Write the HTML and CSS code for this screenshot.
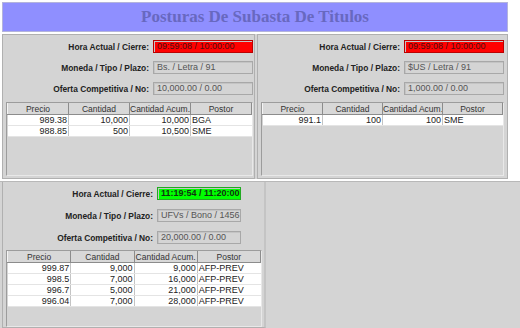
FILE: index.html
```html
<!DOCTYPE html>
<html lang="es">
<head>
<meta charset="UTF-8">
<title>Posturas De Subasta De Titulos</title>
<link rel="stylesheet" href="styles.css">
</head>
<body>
<div class="screen">
    <div class="header"><h1>Posturas De Subasta De Titulos</h1></div>

    <div class="top">
        <!-- Bs. / Letra -->
        <div class="panel">
            <div class="row"><span class="lbl">Hora Actual / Cierre:</span><span class="fld red">09:59:08 / 10:00:00</span></div>
            <div class="row"><span class="lbl">Moneda / Tipo / Plazo:</span><span class="fld">Bs. / Letra / 91</span></div>
            <div class="row"><span class="lbl">Oferta Competitiva / No:</span><span class="fld">10,000.00 / 0.00</span></div>
            <div class="grid">
                <table>
                    <tr><th>Precio</th><th>Cantidad</th><th>Cantidad Acum.</th><th>Postor</th></tr>
                    <tr><td>989.38</td><td>10,000</td><td>10,000</td><td class="name">BGA</td></tr>
                    <tr><td>988.85</td><td>500</td><td>10,500</td><td class="name">SME</td></tr>
                </table>
            </div>
        </div>

        <!-- $US / Letra -->
        <div class="panel right">
            <div class="row"><span class="lbl">Hora Actual / Cierre:</span><span class="fld red">09:59:08 / 10:00:00</span></div>
            <div class="row"><span class="lbl">Moneda / Tipo / Plazo:</span><span class="fld">$US / Letra / 91</span></div>
            <div class="row"><span class="lbl">Oferta Competitiva / No:</span><span class="fld">1,000.00 / 0.00</span></div>
            <div class="grid">
                <table>
                    <tr><th>Precio</th><th>Cantidad</th><th>Cantidad Acum.</th><th>Postor</th></tr>
                    <tr><td>991.1</td><td>100</td><td>100</td><td class="name">SME</td></tr>
                </table>
            </div>
        </div>
    </div>

    <div class="lower">
        <!-- UFVs / Bono -->
        <div class="panel wide">
            <div class="row"><span class="lbl">Hora Actual / Cierre:</span><span class="fld green">11:19:54 / 11:20:00</span></div>
            <div class="row"><span class="lbl">Moneda / Tipo / Plazo:</span><span class="fld">UFVs / Bono / 1456</span></div>
            <div class="row"><span class="lbl">Oferta Competitiva / No:</span><span class="fld">20,000.00 / 0.00</span></div>
            <div class="grid">
                <table>
                    <tr><th>Precio</th><th>Cantidad</th><th>Cantidad Acum.</th><th>Postor</th></tr>
                    <tr><td>999.87</td><td>9,000</td><td>9,000</td><td class="name">AFP-PREV</td></tr>
                    <tr><td>998.5</td><td>7,000</td><td>16,000</td><td class="name">AFP-PREV</td></tr>
                    <tr><td>996.7</td><td>5,000</td><td>21,000</td><td class="name">AFP-PREV</td></tr>
                    <tr><td>996.04</td><td>7,000</td><td>28,000</td><td class="name">AFP-PREV</td></tr>
                </table>
            </div>
        </div>
    </div>
</div>
</body>
</html>
```

FILE: styles.css
```css
body {margin:0;padding:0;background:#fff;font-family:"Liberation Sans",Arial,sans-serif;color:#333;}
.screen {width:520px;height:328px;overflow:hidden;display:flex;flex-direction:column;}
.header {margin:2px 12px 0 2px;height:31px;background:#8f8fff;border:1px solid #b4b4dc;display:flex;align-items:center;justify-content:center;}
.header h1 {margin:0;font-family:"Liberation Serif","Times New Roman",serif;font-size:17px;font-weight:bold;color:#6868c0;}
.top {display:flex;gap:2px;margin:2px 12px 0 2px;background:#d4d4d4;}
.panel {background:#d4d4d4;border:1px solid #b0b0b0;box-sizing:border-box;width:253px;height:145px;padding:5px 1px 0 1px;display:flex;flex-direction:column;}
.panel.right {width:251px;padding-right:3px;}
.lower {flex:1;margin-top:2px;background:#d4d4d4;border-top:1px solid #b8b8b8;}
.panel.wide {width:264px;height:auto;min-height:146px;margin-left:2px;border-top:none;padding:5px 1px 0 1px;border-right:2px solid #c4c4c4;}
.row {display:flex;justify-content:flex-end;align-items:center;gap:4px;margin-bottom:8px;height:13px;}
.wide .row {margin-bottom:9px;padding-right:22px;}
.wide .row:nth-child(3) {margin-bottom:8px;}
.lbl {font-size:8.4px;font-weight:bold;color:#222;white-space:nowrap;}
.fld {box-sizing:border-box;width:100px;height:13px;border:1px solid #a8a8a8;box-shadow:inset 1px 1px 0 #c4c4c4;font-size:9px;color:#555;padding:0 3px;line-height:11px;white-space:nowrap;overflow:hidden;}
.wide .fld {width:84px;}
.fld.red {background:#f00;color:#4a1010;border-color:#b00;}
.fld.green {background:#0f0;color:#113311;font-weight:bold;border-color:#2a2;}
.grid {flex:1;margin:-1px 0 2px 2px;border:1px solid #9c9c9c;border-bottom-color:#e8e8e8;border-right-color:#e8e8e8;background:#d4d4d4;}
.wide .grid {margin:-2px 1px 0 2px;}
table {width:100%;border-collapse:collapse;table-layout:fixed;font-size:9px;}
th {height:11px;padding:0;font-size:8.5px;font-weight:normal;color:#333;background:#d8d8d8;border-left:1px solid #f4f4f4;border-right:1px solid #8c8c8c;border-bottom:1px solid #8c8c8c;text-align:center;line-height:10px;white-space:nowrap;overflow:hidden;}
td {height:10px;padding:0 1px;background:#fff;color:#222;text-align:right;border-right:1px solid #c4c4c4;border-bottom:1px solid #e4e4e4;line-height:10px;white-space:nowrap;overflow:hidden;}
td.name {text-align:left;border-right:none;}
.wide td {height:10px;}
```
